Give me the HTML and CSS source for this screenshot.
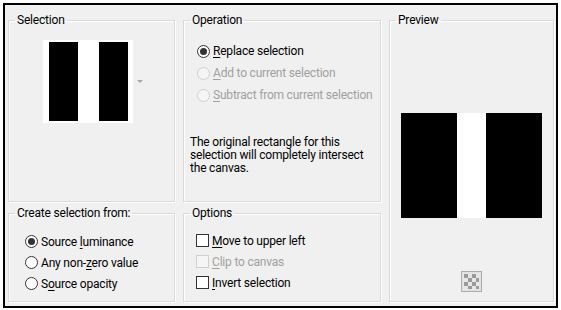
FILE: index.html
```html
<!DOCTYPE html>
<html lang="en">
<head>
  <meta charset="UTF-8" />
  <title>Selection From Mask</title>
  <link rel="stylesheet" href="styles.css">
</head>
<body>
  <div class="dialog">

    <!-- Selection -->
    <fieldset class="ryhma valinta">
      <legend>Selection</legend>
      <div class="valintaRivi">
        <div class="kuva">
          <div class="palkki"></div>
          <div class="palkki"></div>
        </div>
        <span class="nuoli"></span>
      </div>
    </fieldset>

    <!-- Operation -->
    <fieldset class="ryhma toiminto">
      <legend>Operation</legend>
      <div class="lista">
        <label class="rivi"><span class="radio valittu"></span><span><u>R</u>eplace selection</span></label>
        <label class="rivi pois"><span class="radio"></span><span><u>A</u>dd to current selection</span></label>
        <label class="rivi pois"><span class="radio"></span><span><u>S</u>ubtract from current selection</span></label>
      </div>
      <p class="selite">The original rectangle for this selection will completely intersect the canvas.</p>
    </fieldset>

    <!-- Preview -->
    <fieldset class="ryhma esikatselu">
      <legend>Preview</legend>
      <div class="iso">
        <div class="musta"></div>
        <div class="valkoinen"></div>
        <div class="musta"></div>
      </div>
      <button class="ruutu" title="Transparency">
        <svg width="17" height="17" viewBox="0 0 17 17">
          <rect width="17" height="17" fill="#e6e6e6"/>
          <g fill="#9a9a9a">
            <rect x="1" y="1" width="4" height="4"/><rect x="9" y="1" width="4" height="4"/>
            <rect x="5" y="5" width="4" height="4"/><rect x="13" y="5" width="3" height="4"/>
            <rect x="1" y="9" width="4" height="4"/><rect x="9" y="9" width="4" height="4"/>
            <rect x="5" y="13" width="4" height="3"/><rect x="13" y="13" width="3" height="3"/>
          </g>
        </svg>
      </button>
    </fieldset>

    <!-- Create selection from -->
    <fieldset class="ryhma lahde">
      <legend>Create selection from:</legend>
      <div class="lista tiivis">
        <label class="rivi"><span class="radio valittu"></span><span>Source <u>l</u>uminance</span></label>
        <label class="rivi"><span class="radio"></span><span>Any non-<u>z</u>ero value</span></label>
        <label class="rivi"><span class="radio"></span><span>S<u>o</u>urce opacity</span></label>
      </div>
    </fieldset>

    <!-- Options -->
    <fieldset class="ryhma asetukset">
      <legend>Options</legend>
      <div class="lista tiivis">
        <label class="rivi"><span class="ruksi"></span><span><u>M</u>ove to upper left</span></label>
        <label class="rivi pois"><span class="ruksi"></span><span><u>C</u>lip to canvas</span></label>
        <label class="rivi"><span class="ruksi"></span><span><u>I</u>nvert selection</span></label>
      </div>
    </fieldset>

  </div>
</body>
</html>
```

FILE: styles.css
```css
html, body {
  margin: 0;
  padding: 0;
  background: #ffffff;
  font-family: 'Roboto', 'Liberation Sans', sans-serif;
  font-size: 12px;
  letter-spacing: -0.2px;
  color: #000;
}

.dialog {
  box-sizing: border-box;
  width: 555px;
  height: 305px;
  margin: 3px 0 0 3px;
  padding: 8px 0 0 3px;
  border: 2px solid #000;
  background: #f0f0f0;
  display: grid;
  grid-template-columns: 167px 198px 165px;
  grid-template-rows: 189px 96px;
  column-gap: 8px;
  row-gap: 4px;
}

.ryhma {
  margin: 0;
  padding: 0;
  min-width: 0;
  border: 1px solid #d9d9d9;
  box-shadow: inset 1px 1px 0 #fff, 1px 1px 0 #fff;
}

.ryhma legend {
  margin-left: 6px;
  padding: 0 2px;
  line-height: 14px;
  height: 14px;
}

.esikatselu {
  grid-column: 3;
  grid-row: 1 / span 2;
  display: flex;
  flex-direction: column;
  align-items: center;
}

/* Selection */
.valintaRivi {
  display: flex;
  align-items: center;
  padding: 13px 0 0 34px;
}

.kuva {
  display: flex;
  gap: 21px;
  background: #fff;
  padding: 2px 5px 2px 6px;
}

.palkki {
  width: 29px;
  height: 79px;
  background: #000;
}

.nuoli {
  margin-left: 4px;
  width: 0;
  height: 0;
  border-left: 3px solid transparent;
  border-right: 3px solid transparent;
  border-top: 3px solid #a8a8a8;
}

/* Radio and check lists */
.lista {
  padding: 13px 0 0 13px;
}

.lista.tiivis {
  padding: 11px 0 0 16px;
}

.asetukset .lista.tiivis {
  padding: 10px 0 0 12px;
}

.rivi {
  display: flex;
  align-items: center;
  gap: 3px;
  height: 22px;
  white-space: nowrap;
}

.tiivis .rivi {
  height: 21px;
}

.radio {
  box-sizing: border-box;
  width: 13px;
  height: 13px;
  border: 1px solid #333;
  border-radius: 50%;
  background: #fff;
  display: flex;
  align-items: center;
  justify-content: center;
}

.radio.valittu::after {
  content: "";
  width: 7px;
  height: 7px;
  border-radius: 50%;
  background: #333;
}

.ruksi {
  box-sizing: border-box;
  width: 13px;
  height: 13px;
  border: 1px solid #333;
  background: #fff;
}

.pois {
  color: #a0a0a0;
}

.pois .radio, .pois .ruksi {
  border-color: #cfcfcf;
  background: #f5f5f5;
}

u {
  text-decoration-thickness: 1px;
  text-underline-offset: 2px;
}

.selite {
  margin: 30px 8px 0 6px;
  line-height: 13px;
}

/* Preview */
.iso {
  display: flex;
  margin-top: 86px;
  height: 105px;
}

.musta {
  width: 56px;
  background: #000;
}

.valkoinen {
  width: 29px;
  background: #fff;
}

.ruutu {
  margin-top: 53px;
  width: 21px;
  height: 21px;
  padding: 1px;
  border: 1px solid #adadad;
  background: #e1e1e1;
  display: flex;
  align-items: center;
  justify-content: center;
}
```
